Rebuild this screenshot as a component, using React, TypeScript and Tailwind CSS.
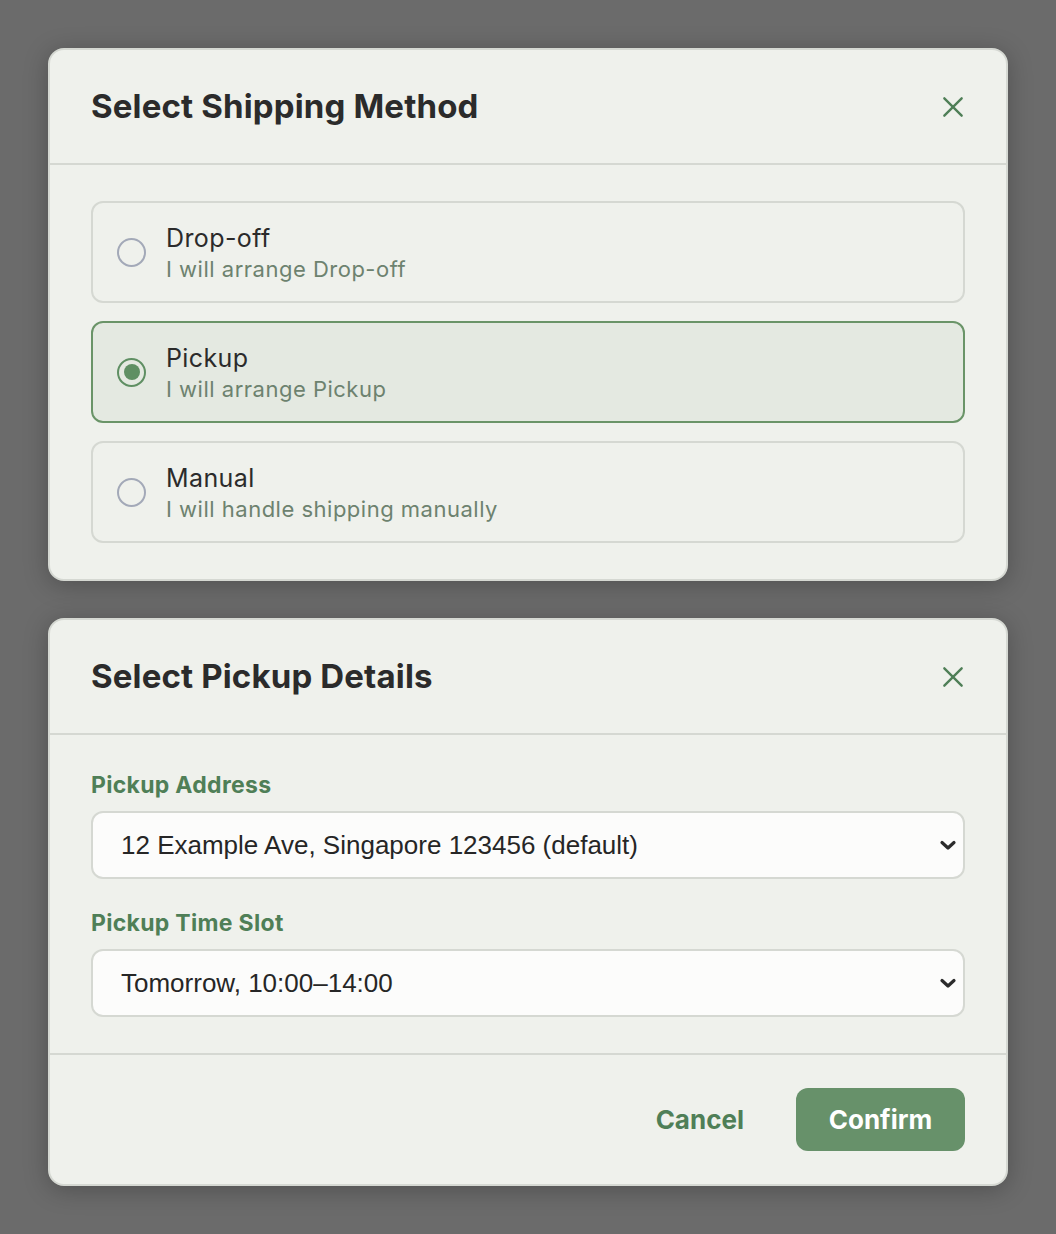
import { useState } from 'react';

const OPTIONS = [
  { id: 'dropoff', title: 'Drop-off', desc: 'I will arrange Drop-off' },
  { id: 'pickup', title: 'Pickup', desc: 'I will arrange Pickup' },
  { id: 'manual', title: 'Manual', desc: 'I will handle shipping manually' },
];

function CloseIcon() {
  return (
    <svg width="26" height="26" viewBox="0 0 24 24" fill="none" stroke="#4f7f57" strokeWidth="2.2" strokeLinecap="round">
      <path d="M4 4L20 20M20 4L4 20" />
    </svg>
  );
}

function Chevron() {
  return (
    <svg width="18" height="12" viewBox="0 0 18 12" fill="none" stroke="#2b2b2b" strokeWidth="3.2" strokeLinecap="round" strokeLinejoin="round"
      className="pointer-events-none absolute right-[8px] top-1/2 -translate-y-1/2">
      <path d="M3 3.5L9 9L15 3.5" />
    </svg>
  );
}

function Header({ title }: { title: string }) {
  return (
    <div className="h-[115px] flex items-center justify-between pl-[41px] pr-[38px] border-b-2 border-[#d5d8d2]">
      <h2 className="text-[33px] font-bold tracking-[0.15px] text-[#2b2b2b]">{title}</h2>
      <button className="w-[30px] h-[30px] flex items-center justify-center"><CloseIcon /></button>
    </div>
  );
}

function Radio({ checked }: { checked: boolean }) {
  return (
    <span className={`w-[29px] h-[29px] rounded-full border-2 flex items-center justify-center shrink-0 ${checked ? 'border-[#5f8f63]' : 'border-[#a3a9b8]'}`}>
      {checked && <span className="w-[16px] h-[16px] rounded-full bg-[#5f8f63]" />}
    </span>
  );
}

function Field({ label, value }: { label: string; value: string }) {
  return (
    <div>
      <label className="block text-[23px] leading-[28px] font-bold text-[#4f7f57] tracking-[0.3px]">{label}</label>
      <div className="relative mt-[12px]">
        <select
          className="w-full h-[68px] appearance-none rounded-[12px] border-2 border-[#d5d8d2] bg-[#fcfcfb] pl-[28px] pr-[48px] text-[26px] text-[#262626] outline-none"
          style={{ fontFamily: '"Liberation Sans", Arial, sans-serif' }}
          defaultValue={value}
        >
          <option>{value}</option>
        </select>
        <Chevron />
      </div>
    </div>
  );
}

export default function App() {
  const [sel, setSel] = useState('pickup');

  return (
    <div className="min-h-[1234px] bg-[#6b6b6b] px-[48px] py-[48px] flex flex-col gap-[37px]" style={{ fontFamily: 'Inter, "Noto Sans", sans-serif' }}>
      <div className="rounded-[16px] bg-[#eff1ec] border-2 border-[#d5d8d2] shadow-[0_4px_24px_rgba(0,0,0,0.25)]">
        <Header title="Select Shipping Method" />
        <div className="px-[41px] pt-[36px] pb-[36px] flex flex-col gap-[18px]">
          {OPTIONS.map(o => {
            const on = sel === o.id;
            return (
              <button
                key={o.id}
                onClick={() => setSel(o.id)}
                className={`h-[102px] w-full rounded-[12px] border-2 flex items-center gap-[20px] pl-[24px] text-left ${on ? 'border-[#6a9468] bg-[#e4e9e1]' : 'border-[#d5d8d2] bg-[#eff1ec]'}`}
              >
                <Radio checked={on} />
                <div className="flex flex-col pt-[2px]">
                  <span className="text-[25px] leading-[32px] tracking-[0.4px] text-[#2b2b2b]">{o.title}</span>
                  <span className="text-[22px] leading-[31px] text-[#6d826f] tracking-[0.5px]">{o.desc}</span>
                </div>
              </button>
            );
          })}
        </div>
      </div>

      <div className="rounded-[16px] bg-[#eff1ec] border-2 border-[#d5d8d2] shadow-[0_4px_24px_rgba(0,0,0,0.25)]">
        <Header title="Select Pickup Details" />
        <div className="px-[41px] pt-[36px] pb-[36px] flex flex-col gap-[30px] border-b-2 border-[#d5d8d2]">
          <Field label="Pickup Address" value="12 Example Ave, Singapore 123456 (default)" />
          <Field label="Pickup Time Slot" value="Tomorrow, 10:00–14:00" />
        </div>
        <div className="px-[41px] pt-[33px] pb-[33px] flex justify-end items-center gap-[28px]">
          <button className="h-[63px] px-[24px] text-[26px] font-bold text-[#4f7f57]">Cancel</button>
          <button className="h-[63px] w-[169px] rounded-[12px] bg-[#67916a] text-[26px] font-bold text-white">Confirm</button>
        </div>
      </div>
    </div>
  );
}
